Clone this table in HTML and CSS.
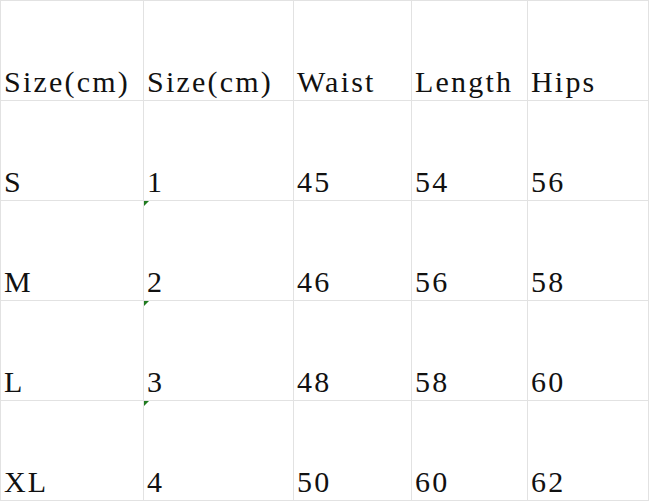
FILE: index.html
```html
<!DOCTYPE html>
<html>
<head>
<meta charset="utf-8">
<link rel="stylesheet" href="styles.css">
</head>
<body>
<div class="sheet">
  <div class="cell">Size(cm)</div><div class="cell">Size(cm)</div><div class="cell">Waist</div><div class="cell">Length</div><div class="cell">Hips</div>
  <div class="cell">S</div><div class="cell">1</div><div class="cell">45</div><div class="cell">54</div><div class="cell">56</div>
  <div class="cell">M</div><div class="cell flag">2</div><div class="cell">46</div><div class="cell">56</div><div class="cell">58</div>
  <div class="cell">L</div><div class="cell flag">3</div><div class="cell">48</div><div class="cell">58</div><div class="cell">60</div>
  <div class="cell">XL</div><div class="cell flag">4</div><div class="cell">50</div><div class="cell">60</div><div class="cell">62</div>
</div>
</body>
</html>
```
FILE: styles.css
```css
html, body {
  margin: 0;
  padding: 0;
  background: #ffffff;
}
.sheet {
  display: grid;
  grid-template-columns: 143px 150px 118px 116px 121px;
  grid-auto-rows: 100px;
  border-left: 1px solid #e2e2e2;
  border-top: 1px solid #e2e2e2;
  width: max-content;
  font-family: "Liberation Serif", "Times New Roman", serif;
  font-size: 30px;
  letter-spacing: 2.2px;
  color: #111111;
}
.cell {
  position: relative;
  display: flex;
  align-items: flex-end;
  border-right: 1px solid #e2e2e2;
  border-bottom: 1px solid #e2e2e2;
  padding: 0 0 3px 3px;
  line-height: 1;
  white-space: nowrap;
}
.flag::before {
  content: "";
  position: absolute;
  left: 0;
  top: 0;
  width: 0;
  height: 0;
  border-top: 5px solid #1f7a1f;
  border-right: 5px solid transparent;
}
```
